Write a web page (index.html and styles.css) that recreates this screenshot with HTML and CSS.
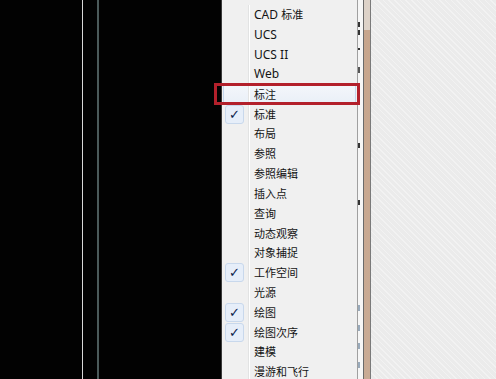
FILE: index.html
```html
<!DOCTYPE html>
<html lang="zh-CN">
<head>
  <meta charset="UTF-8" />
  <meta name="viewport" content="width=device-width, initial-scale=1.0" />
  <title>工具栏菜单</title>
  <link rel="stylesheet" href="styles.css">
</head>
<body>
  <div class="screen">
    <!-- drawing area -->
    <div class="canvas">
      <span class="rule rule-light"></span>
      <span class="rule rule-dark"></span>
    </div>

    <!-- context menu -->
    <div class="menu">
      <ul class="items">
        <li class="item"><span class="gutter"></span><span class="label latin">CAD <span class="cjk">标准</span></span></li>
        <li class="item"><span class="gutter"></span><span class="label latin">UCS</span></li>
        <li class="item"><span class="gutter"></span><span class="label latin">UCS II</span></li>
        <li class="item"><span class="gutter"></span><span class="label latin">Web</span></li>
        <li class="item hover"><span class="gutter"></span><span class="label">标注</span></li>
        <li class="item"><span class="gutter"><span class="check">✓</span></span><span class="label">标准</span></li>
        <li class="item"><span class="gutter"></span><span class="label">布局</span></li>
        <li class="item"><span class="gutter"></span><span class="label">参照</span></li>
        <li class="item"><span class="gutter"></span><span class="label">参照编辑</span></li>
        <li class="item"><span class="gutter"></span><span class="label">插入点</span></li>
        <li class="item"><span class="gutter"></span><span class="label">查询</span></li>
        <li class="item"><span class="gutter"></span><span class="label">动态观察</span></li>
        <li class="item"><span class="gutter"></span><span class="label">对象捕捉</span></li>
        <li class="item"><span class="gutter"><span class="check">✓</span></span><span class="label">工作空间</span></li>
        <li class="item"><span class="gutter"></span><span class="label">光源</span></li>
        <li class="item"><span class="gutter"><span class="check">✓</span></span><span class="label">绘图</span></li>
        <li class="item"><span class="gutter"><span class="check">✓</span></span><span class="label">绘图次序</span></li>
        <li class="item"><span class="gutter"></span><span class="label">建模</span></li>
        <li class="item"><span class="gutter"></span><span class="label">漫游和飞行</span></li>
      </ul>
      <!-- red annotation frame -->
      <div class="mark-box"></div>
    </div>

    <!-- docked toolbar edge + window frame -->
    <div class="toolbar-edge"></div>
    <div class="frame"></div>

    <div class="desk"></div>
  </div>
</body>
</html>
```

FILE: styles.css
```css
/* Reset */
body {
  margin: 0;
  overflow: hidden;
  font-family: "Noto Sans CJK SC", "Noto Sans", sans-serif;
}

.screen {
  display: flex;
  width: 496px;
  height: 379px;
}

/* Black drawing area */
.canvas {
  width: 222px;
  flex-shrink: 0;
  background-color: #020202;
  display: flex;
  padding-left: 82px;
  box-sizing: border-box;
  border-right: 1px solid #3a3a3a;
}

.rule {
  display: block;
  height: 100%;
}

.rule-light {
  width: 1px;
  background-color: #d8d8d8;
}

.rule-dark {
  width: 2px;
  margin-left: 14px;
  background-color: #4b5a5a;
}

/* Menu */
.menu {
  position: relative;
  width: 135px;
  flex-shrink: 0;
  background-color: #f0f0f0;
  border-right: 1px solid #a0a0a0;
}

.items {
  list-style: none;
  margin: 0;
  padding: 5px 0 0 0;
}

.item {
  display: flex;
  align-items: center;
  height: 19.83px;
  margin: 0 1px 0 1px;
}

.item.hover {
  background: linear-gradient(#f4f7fb, #e9eff7);
  box-shadow: inset 0 0 0 1px #c4d6ec;
  border-radius: 2px;
}

.gutter {
  width: 25px;
  height: 100%;
  display: flex;
  align-items: center;
  border-right: 1px solid #e2e3e3;
  box-shadow: 1px 0 0 #ffffff;
  flex-shrink: 0;
}

.check {
  display: flex;
  align-items: center;
  justify-content: center;
  width: 17px;
  height: 17px;
  margin-left: 2px;
  border: 1px solid #c8d8ec;
  border-radius: 3px;
  background-color: #e6eef9;
  color: #0c1c4c;
  font-family: "DejaVu Sans", sans-serif;
  font-size: 13px;
  font-weight: bold;
}

.label {
  padding-left: 5px;
  font-size: 11px;
  color: #141414;
  white-space: nowrap;
  line-height: 1;
}

.label.latin {
  font-family: "Noto Sans", "Noto Sans CJK SC", sans-serif;
  font-size: 12px;
}

.label .cjk {
  font-family: "Noto Sans CJK SC", sans-serif;
  font-size: 11px;
}

/* red highlight frame drawn over the menu */
.mark-box {
  position: absolute;
  left: -8px;
  top: 83px;
  width: 140px;
  height: 16px;
  border: 3px solid #b3202b;
}

/* Toolbar edge on the right */
.toolbar-edge {
  width: 5px;
  flex-shrink: 0;
  background-color: #f6f6f6;
  background-image:
    linear-gradient(#333, #333),
    linear-gradient(#333, #333),
    linear-gradient(#333, #333),
    linear-gradient(#555, #555),
    linear-gradient(#333, #333),
    linear-gradient(#333, #333),
    linear-gradient(#9ab, #9ab),
    linear-gradient(#9ab, #9ab),
    linear-gradient(#9ab, #9ab),
    linear-gradient(#9ab, #9ab);
  background-repeat: no-repeat;
  background-size: 2px 5px, 2px 5px, 2px 2px, 2px 6px, 2px 5px, 2px 5px, 2px 6px, 2px 6px, 2px 6px, 2px 6px;
  background-position: 0 22px, 0 30px, 0 48px, 0 67px, 0 143px, 0 200px, 0 305px, 0 325px, 0 343px, 0 362px;
  border-right: 1px solid #6a6a6a;
}

.frame {
  width: 6px;
  flex-shrink: 0;
  background: linear-gradient(#ddd2c8 0, #ddd2c8 30px, #c7a58c 30px, #c9ab95 100%);
  border-right: 1px solid #7a7a7a;
}

.desk {
  flex: 1;
  background-color: #ebebeb;
  background-image: repeating-linear-gradient(45deg, rgba(255, 255, 255, 0.35) 0 1px, transparent 1px 4px);
}
```
